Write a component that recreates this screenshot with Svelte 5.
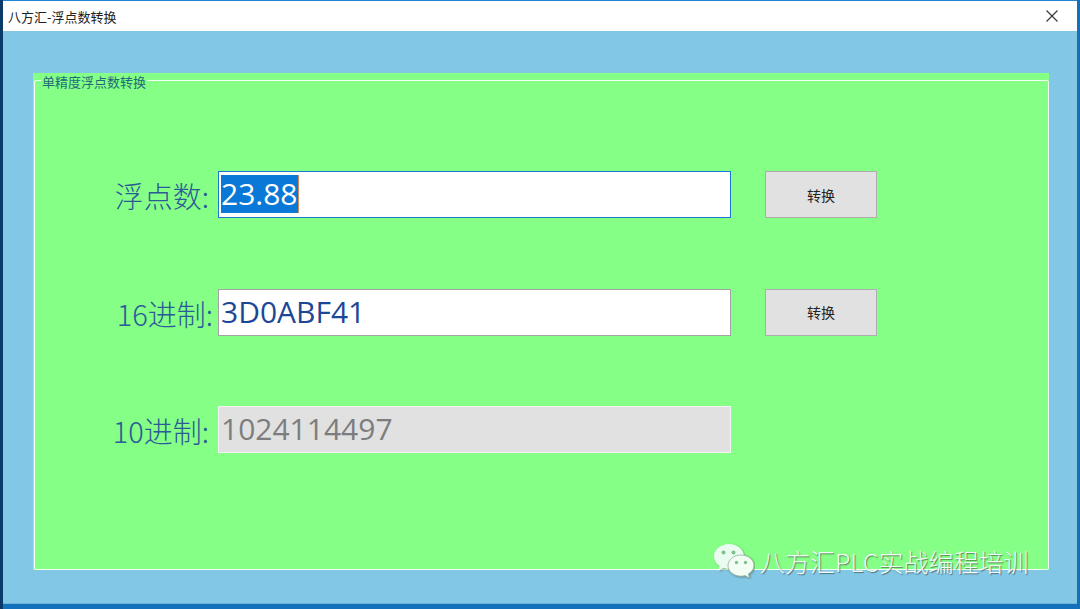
<script lang="ts">
  const rows = [
    { label: '浮点数:', value: '23.88', kind: 'focus', button: true },
    { label: '16进制:', value: '3D0ABF41', kind: 'normal', button: true },
    { label: '10进制:', value: '1024114497', kind: 'disabled', button: false }
  ];
</script>

<div class="desktop">
  <div class="window">
    <header class="titlebar">
      <span class="title">八方汇-浮点数转换</span>
      <svg class="close" width="12" height="12" viewBox="0 0 12 12" aria-hidden="true">
        <path d="M0.5 0.5 L11.5 11.5 M11.5 0.5 L0.5 11.5" stroke="#333" stroke-width="1.1" fill="none" />
      </svg>
    </header>
    <main class="client">
      <section class="group">
        <span class="legend">单精度浮点数转换</span>
        <div class="frame">
          {#each rows as row, i}
            <div class="row">
              <span class="label" class:nudge={i === 1}>{row.label}</span>
              <div class="field {row.kind}">
                {#if row.kind === 'focus'}
                  <span class="selected">{row.value}</span>
                {:else}
                  {row.value}
                {/if}
              </div>
              {#if row.button}
                <div class="button">转换</div>
              {/if}
            </div>
          {/each}
        </div>
      </section>
    </main>
  </div>

  <div class="watermark">
    <svg width="42" height="36" viewBox="0 0 42 36" aria-hidden="true">
      <g class="bubbles">
        <path d="M16 1 C7.5 1 1 6.6 1 13.5 C1 17.4 3.2 20.8 6.6 23 L5 28 L10.8 25 C12.6 25.6 14.3 25.9 16 25.9 C24.5 25.9 31 20.3 31 13.5 C31 6.6 24.5 1 16 1 Z" fill="#eafcef" />
        <path d="M28 12 C20.6 12 15 16.9 15 22.6 C15 28.4 20.6 33.2 28 33.2 C29.4 33.2 30.8 33 32 32.6 L36.6 35.2 L35.4 31 C38.6 29 41 26 41 22.6 C41 16.9 35.4 12 28 12 Z" fill="#f2fdf4" stroke="#8fae97" stroke-width="0.8" />
        <circle cx="10.5" cy="9.5" r="2" fill="#7fc08f" />
        <circle cx="20.5" cy="9.5" r="2" fill="#7fc08f" />
        <circle cx="23.5" cy="19.5" r="1.7" fill="#7fc08f" />
        <circle cx="32.5" cy="19.5" r="1.7" fill="#7fc08f" />
      </g>
    </svg>
    <span class="mark-text">八方汇PLC实战编程培训</span>
  </div>
</div>

<style>
  :global(body) {
    margin: 0;
  }

  .desktop {
    position: relative;
    width: 1080px;
    height: 609px;
    overflow: hidden;
    padding: 1px 3px 5px 3px;
    box-sizing: border-box;
    background: linear-gradient(to right, #0a3a68 0, #0a3a68 3px, #1470bb 3px);
    font-family: "Noto Sans CJK SC", "Noto Sans", sans-serif;
  }

  .window {
    display: flex;
    flex-direction: column;
    height: 100%;
    box-shadow: 0 -1px 0 #1f86d8;
  }

  .titlebar {
    flex: 0 0 30px;
    display: flex;
    align-items: center;
    justify-content: space-between;
    padding: 0 19px 0 5px;
    background: #fff;
  }

  .title {
    font-size: 13px;
    color: #222;
  }

  .close {
    display: block;
  }

  .client {
    flex: 1;
    padding: 42px 28px 33px 30px;
    background: #82c8e6;
    border-bottom: 1px solid #6fb4d4;
    min-height: 0;
    box-sizing: border-box;
  }

  .group {
    position: relative;
    height: 100%;
    box-sizing: border-box;
    padding-top: 7px;
    background: #85ff85;
  }

  .legend {
    position: absolute;
    top: 0;
    left: 8px;
    padding: 0 1px;
    background: #85ff85;
    font-size: 13px;
    line-height: 18px;
    color: #1f6a78;
  }

  .frame {
    height: 100%;
    box-sizing: border-box;
    margin-left: 1px;
    border: 1.5px solid #f2fff2;
    border-radius: 2px;
    padding-top: 90px;
    display: flex;
    flex-direction: column;
    gap: 71px;
  }

  .row {
    display: flex;
    align-items: flex-start;
    height: 46.5px;
  }

  .label {
    flex: 0 0 183px;
    box-sizing: border-box;
    padding-right: 9px;
    text-align: right;
    font-size: 29px;
    line-height: 49px;
    font-weight: 300;
    white-space: nowrap;
    color: #2a5a98;
  }

  .label.nudge {
    padding-right: 5px;
  }

  .field {
    width: 513px;
    height: 47px;
    box-sizing: border-box;
    padding-left: 2px;
    font-family: "Open Sans", "Noto Sans", sans-serif;
    font-size: 30px;
    line-height: 44px;
    white-space: nowrap;
    color: #1d4796;
    background: #fff;
    border: 1.5px solid #a3a3a3;
  }

  .field.focus {
    border-color: #1a78d4;
    padding: 2px 0 0 2px;
    line-height: 40px;
  }

  .selected {
    display: inline-block;
    background: #0a78d7;
    color: #fff;
    height: 38px;
    line-height: 38px;
    border-right: 1px solid #d08a58;
  }

  .field.disabled {
    background: #e1e1e1;
    color: #7d7d7d;
    border-color: #f3f3f3;
  }

  .button {
    width: 112px;
    height: 47px;
    margin-left: 34px;
    box-sizing: border-box;
    display: flex;
    align-items: center;
    justify-content: center;
    font-size: 14px;
    color: #222;
    background: #e1e1e1;
    border: 1.5px solid #adadad;
  }

  .watermark {
    position: absolute;
    left: 713px;
    top: 542px;
    display: flex;
    align-items: center;
    gap: 5px;
  }

  .bubbles {
    filter: drop-shadow(1px 1px 1px rgba(60, 70, 60, 0.45));
  }

  .mark-text {
    font-size: 25px;
    line-height: 38px;
    font-weight: 300;
    white-space: nowrap;
    color: #f2fbf5;
    text-shadow: 1px 1px 1px rgba(50, 50, 50, 0.6);
  }
</style>
